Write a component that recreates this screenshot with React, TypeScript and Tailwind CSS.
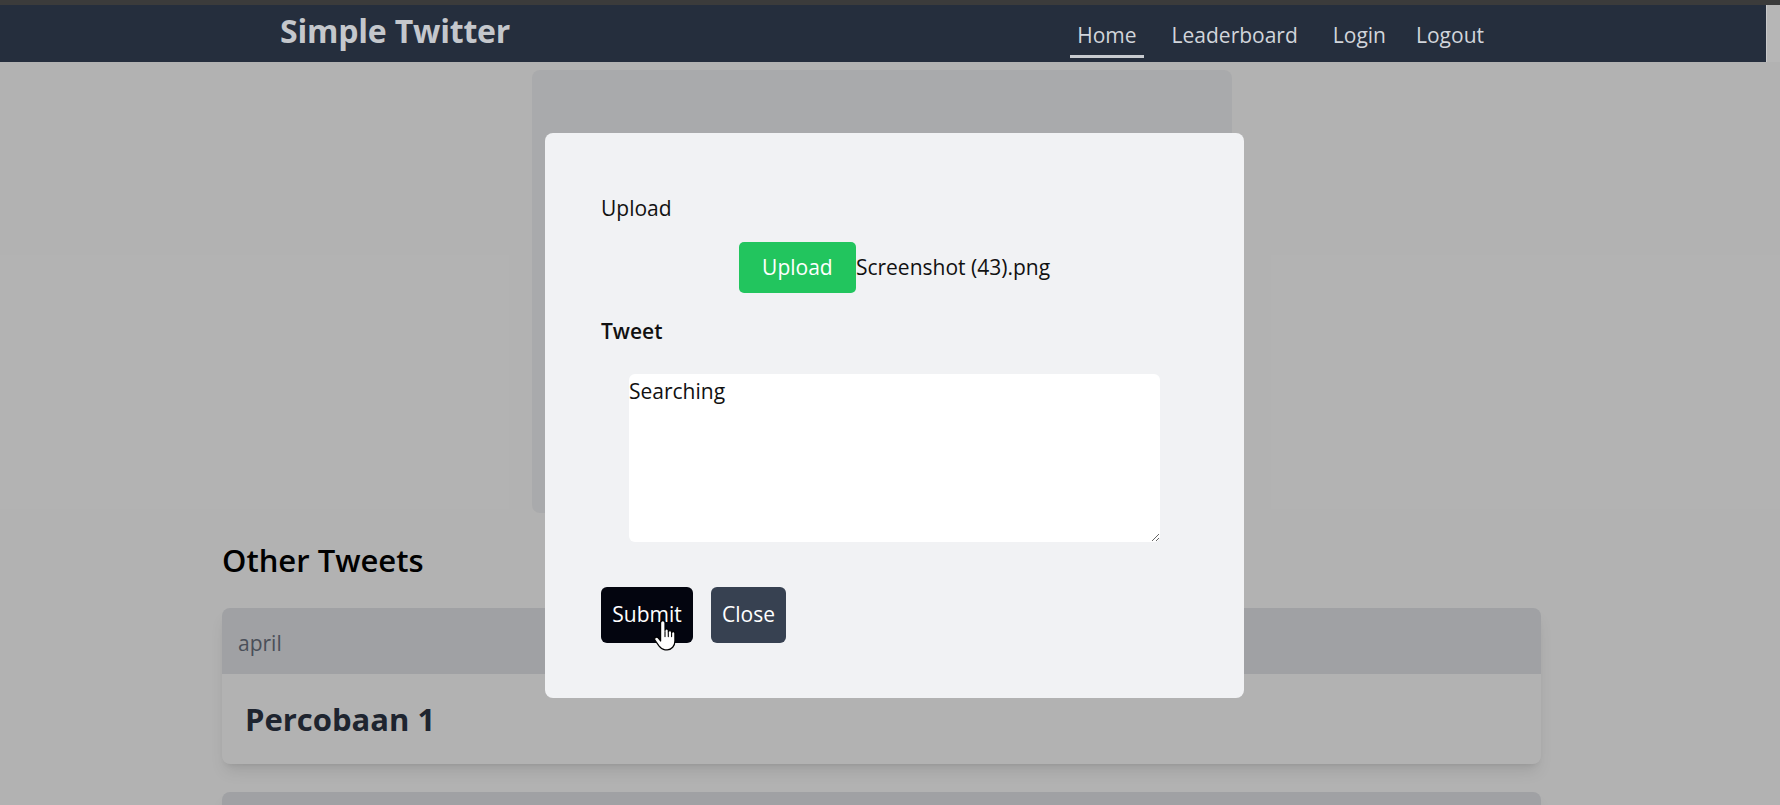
import { useState } from "react";

function HandCursor() {
  return (
    <svg width="22" height="31" viewBox="0 0 20 28" className="absolute left-[53px] top-[33px] pointer-events-none">
      <path
        d="M6 2.5C6 1.4 6.9 0.5 8 0.5C9.1 0.5 10 1.4 10 2.5L10 9.5C10 8.7 10.7 8 11.5 8C12.3 8 13 8.7 13 9.5L13 11C13 10.2 13.7 9.5 14.5 9.5C15.3 9.5 16 10.2 16 11L16 12C16 11.2 16.7 10.5 17.5 10.5C18.3 10.5 19 11.2 19 12L19 19C19 23.5 16 27 12 27L10 27C7.5 27 6 25.5 4.5 23.5L1 18.5C0.3 17.5 0.6 16.3 1.5 15.8C2.4 15.3 3.4 15.6 4 16.4L6 19Z"
        fill="#fff"
        stroke="#000"
        strokeWidth="1.1"
        strokeLinejoin="round"
      />
      <path d="M10 10.5L10 15M13 11.5L13 15M16 12.5L16 15" stroke="#000" strokeWidth="1" strokeLinecap="round" />
    </svg>
  );
}

function Navbar() {
  return (
    <div className="flex h-[57px]">
      <nav className="flex-1 bg-[#252e3d] flex items-center">
        <div className="flex w-full items-center justify-between pl-[280px] pr-[282px]">
          <a className="text-[32px] font-bold text-[#c4c7cc] leading-none -mt-[6px] tracking-[-0.2px]">Simple Twitter</a>
          <div className="flex items-center text-[21px] text-[#d1d5db] mt-[6px]">
            <a className="px-[7px] pt-[5px] pb-[4px] border-b-[3px] border-[#c8cbd0]">Home</a>
            <a className="ml-[28px] pb-[1px]">Leaderboard</a>
            <a className="ml-[35px] pb-[1px]">Login</a>
            <a className="ml-[30px] pb-[1px]">Logout</a>
          </div>
        </div>
      </nav>
      <div className="w-[14px] bg-[#b6b6b6] border-l border-[#c9c9cb]" />
    </div>
  );
}

function TweetCard({ user, title }: { user?: string; title?: string }) {
  return (
    <div className="rounded-lg bg-white shadow-lg overflow-hidden">
      <div className="h-[66px] bg-[#e5e7eb] flex items-center px-[16px] pt-[6px] text-[21px] text-[#6b7280]">{user}</div>
      <div className="h-[90px] flex items-center px-[23px] text-[31px] font-bold text-[#2c3444]">{title}</div>
    </div>
  );
}

export default function App() {
  const [text, setText] = useState("Searching");

  return (
    <div className="relative h-[805px] w-full overflow-hidden bg-white" style={{ fontFamily: '"Open Sans", "Noto Sans", sans-serif' }}>
      <div className="h-[5px] bg-[#3b3b3b]" />
      <Navbar />
      <main className="w-[1319px] ml-[222px]">
        <div className="mx-auto mt-[8px] h-[443px] w-[700px] rounded-lg bg-[#f3f4f6]" />
        <h2 className="mt-[27px] text-[31px] font-semibold text-black leading-[40px]">Other Tweets</h2>
        <div className="mt-[28px] flex flex-col gap-[28px]">
          <TweetCard user="april" title="Percobaan 1" />
          <TweetCard />
        </div>
      </main>

      <div className="absolute inset-x-0 bottom-0 top-[62px] bg-black/30" />

      <div className="absolute inset-0 flex items-start justify-center pt-[133px] pl-[9px]">
        <div className="w-[699px] h-[565px] rounded-lg bg-[#f1f2f4] px-[56px] pt-[60px]">
          <label className="block text-[21px] leading-[30px] text-[#111]">Upload</label>
          <div className="mt-[19px] flex items-center justify-center">
            <button className="h-[51px] w-[117px] rounded-[5px] bg-[#22c55e] text-[21px] text-white">Upload</button>
            <span className="text-[21px] text-[#111]">Screenshot (43).png</span>
          </div>
          <label className="mt-[23px] block text-[21px] font-semibold leading-[30px] text-[#111]">Tweet</label>
          <div className="mt-[28px] px-[28px]">
            <textarea
              value={text}
              onChange={(e) => setText(e.target.value)}
              className="block h-[168px] w-full rounded-[6px] border-0 bg-white p-0 pt-[2px] text-[21px] leading-[30px] text-[#111] outline-none"
            />
          </div>
          <div className="mt-[45px] flex gap-[18px]">
            <div className="relative">
              <button className="h-[56px] w-[92px] rounded-[6px] bg-[#03050f] text-[21px] text-white">Submit</button>
              <HandCursor />
            </div>
            <button className="h-[56px] w-[75px] rounded-[6px] bg-[#374151] text-[21px] text-white">Close</button>
          </div>
        </div>
      </div>
    </div>
  );
}
